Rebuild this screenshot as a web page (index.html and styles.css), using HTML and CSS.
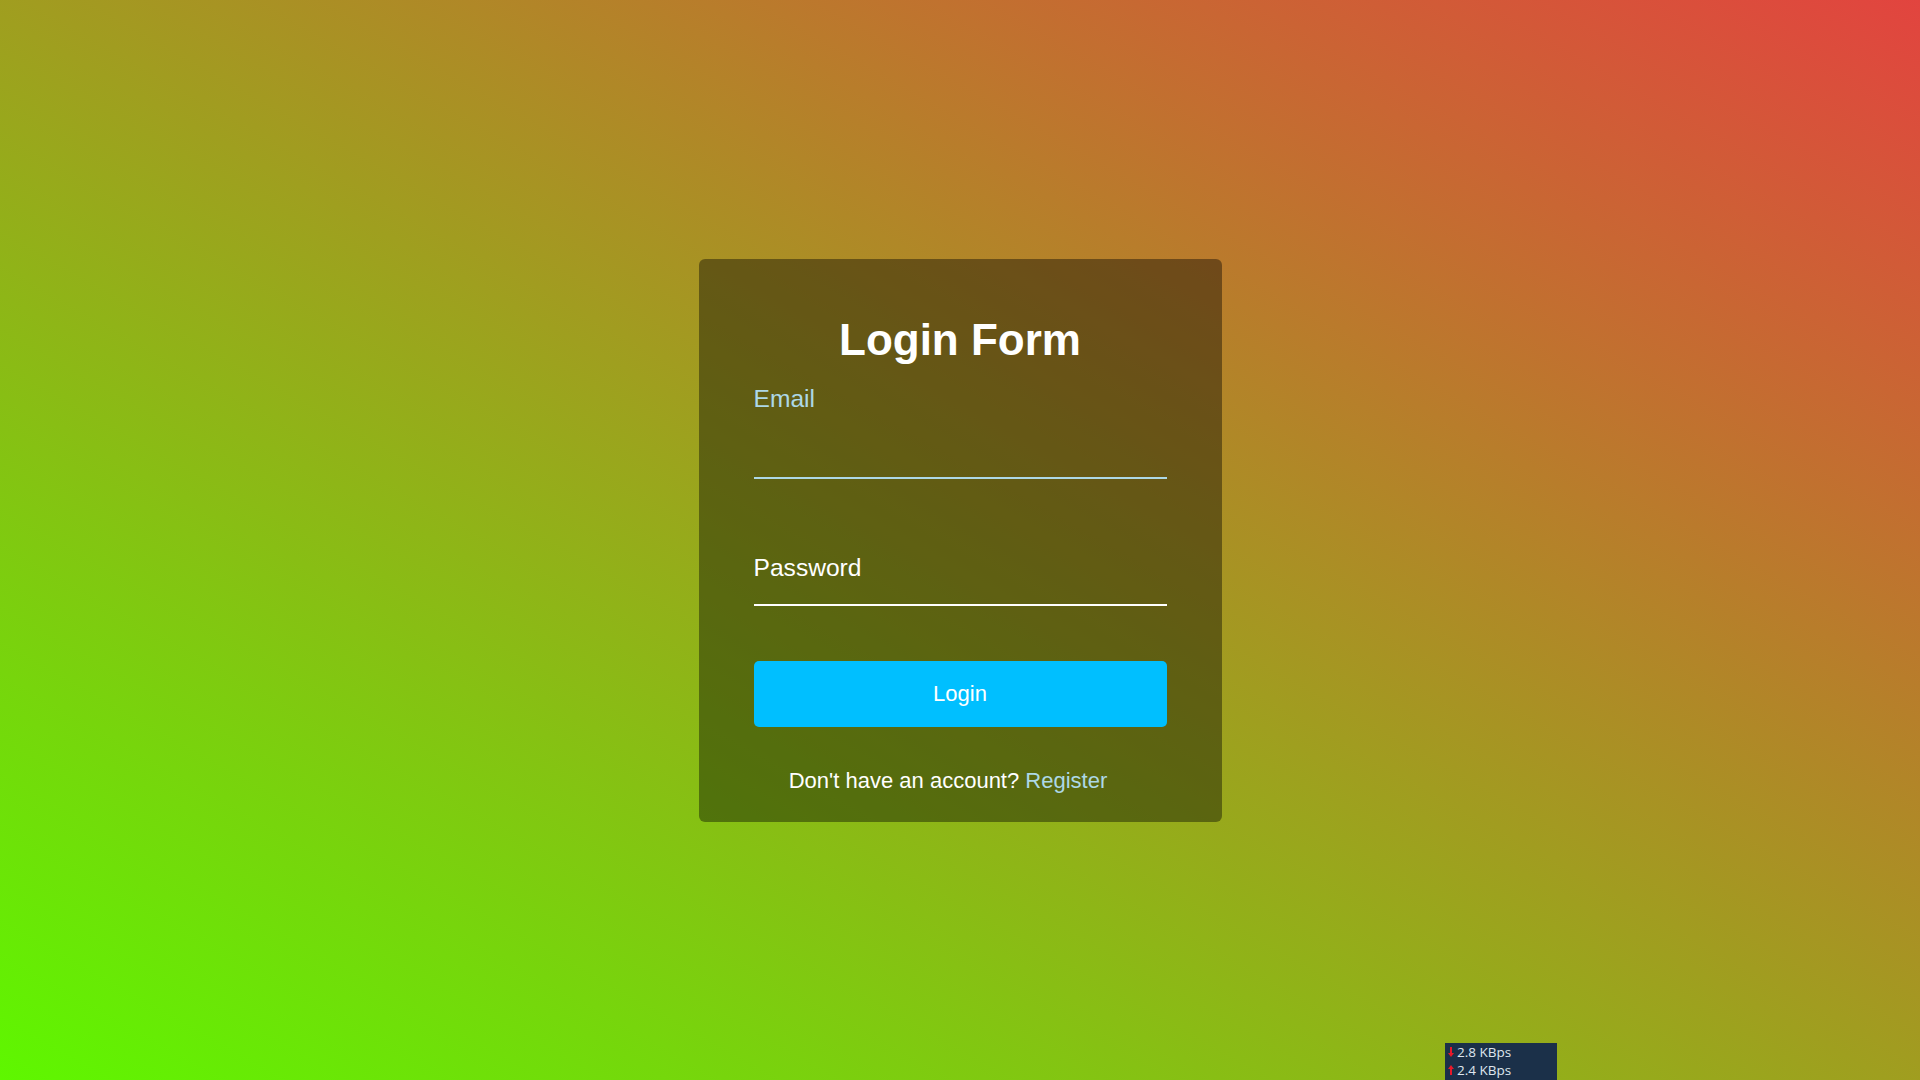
FILE: index.html
```html
<!DOCTYPE html>
<html lang="en">
<head>
<meta charset="utf-8">
<title>Login Form</title>
<link rel="stylesheet" href="styles.css">
</head>
<body>
<main class="page">
  <form class="card">
    <h2 class="title">Login Form</h2>
    <div class="field field-email">
      <label class="label label-active" for="email">Email</label>
      <input class="input input-active" id="email" type="email">
    </div>
    <div class="field field-password">
      <label class="label" for="password">Password</label>
      <input class="input input-pw" id="password" type="password">
    </div>
    <button class="btn" type="button">Login</button>
    <p class="footer">Don't have an account? <a class="link" href="#">Register</a></p>
  </form>
</main>
<div class="netspeed">
  <div class="net-row">
    <svg class="arrow" width="6" height="10" viewBox="0 0 6 10"><path d="M2 0h2v6h2L3 10 0 6h2z" fill="#e8182a"/></svg>
    <span>2.8 KBps</span>
  </div>
  <div class="net-row">
    <svg class="arrow" width="6" height="10" viewBox="0 0 6 10"><path d="M2 10h2V4h2L3 0 0 4h2z" fill="#e8182a"/></svg>
    <span>2.4 KBps</span>
  </div>
</div>
</body>
</html>
```
FILE: styles.css
```css
* { box-sizing: border-box; }
html, body { margin: 0; padding: 0; }
body {
  width: 1920px;
  height: 1080px;
  overflow: hidden;
  font-family: "Liberation Sans", Arial, sans-serif;
  background: linear-gradient(to top right, #5ef700, #e2443f);
}
.page {
  height: 1080px;
  display: flex;
  align-items: center;
  justify-content: center;
}
.card {
  width: 523px;
  padding: 56px 55px 28px;
  background: rgba(0, 0, 0, 0.4);
  border-radius: 6px;
  display: flex;
  flex-direction: column;
}
.title {
  margin: 0 0 20px;
  font-size: 44px;
  line-height: 50px;
  font-weight: 700;
  color: #fff;
  text-align: center;
}
.field { display: flex; flex-direction: column; }
.field-password { margin-top: 75px; }
.label {
  font-size: 24.6px;
  line-height: 28px;
  color: #fff;
}
.label-active { color: #add8e6; }
.input {
  display: block;
  width: 100%;
  margin: 0;
  padding: 0;
  border: 0;
  border-bottom: 2px solid #fff;
  background: transparent;
  outline: none;
  color: #fff;
  font-size: 20px;
  font-family: inherit;
}
.input-active { height: 66px; border-bottom-color: #add8e6; }
.input-pw { height: 24px; }
.btn {
  margin-top: 55px;
  height: 66px;
  border: 0;
  border-radius: 5px;
  background: #00bfff;
  color: #fff;
  font-family: inherit;
  font-size: 22px;
  cursor: pointer;
}
.footer {
  margin: 41px 0 0;
  padding-right: 24px;
  font-size: 22px;
  line-height: 26px;
  color: #fff;
  text-align: center;
}
.link { color: #add8e6; text-decoration: none; }
.netspeed {
  position: fixed;
  left: 1445px;
  top: 1043px;
  width: 112px;
  height: 37px;
  background: #1b3049;
  padding: 0 0 0 3px;
  font-family: "Open Sans", "DejaVu Sans", sans-serif;
  font-size: 13.5px;
  color: #dfe6ee;
}
.net-row {
  display: flex;
  align-items: center;
  gap: 3px;
  height: 18px;
  line-height: 18px;
}
.arrow { flex: none; }
```
